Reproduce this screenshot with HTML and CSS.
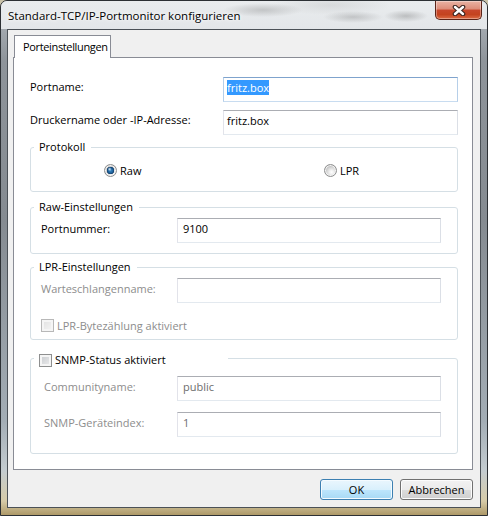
FILE: index.html
```html
<!DOCTYPE html>
<html lang="de">
<head>
    <meta charset="UTF-8">
    <title>Standard-TCP/IP-Portmonitor konfigurieren</title>
    <link rel="stylesheet" href="styles.css">
</head>
<body>
    <div class="window">
        <div class="titlebar">
            <span class="title">Standard-TCP/IP-Portmonitor konfigurieren</span>
            <button class="close" type="button" aria-label="Schließen">
                <svg width="14" height="11" viewBox="0 0 14 11">
                    <path d="M3 2 L11 9 M11 2 L3 9" stroke="#3b2520" stroke-width="4.6" stroke-linecap="round"/>
                    <path d="M3 2 L11 9 M11 2 L3 9" stroke="#fff" stroke-width="2.4" stroke-linecap="round"/>
                </svg>
            </button>
        </div>

        <div class="client">
            <div class="tabs">
                <div class="tab">Porteinstellungen</div>
            </div>

            <div class="pane">
                <div class="top-grid">
                    <label class="lbl">Portname:</label>
                    <div class="field field-top focused"><span class="sel">fritz.box</span></div>
                    <label class="lbl">Druckername oder -IP-Adresse:</label>
                    <div class="field field-top">fritz.box</div>
                </div>

                <fieldset class="group group-proto">
                    <legend>Protokoll</legend>
                    <div class="radios">
                        <label class="opt"><input class="radio" type="radio" name="proto" checked> Raw</label>
                        <label class="opt"><input class="radio" type="radio" name="proto"> LPR</label>
                    </div>
                </fieldset>

                <fieldset class="group group-raw">
                    <legend>Raw-Einstellungen</legend>
                    <div class="row">
                        <label class="lbl">Portnummer:</label>
                        <div class="field">9100</div>
                    </div>
                </fieldset>

                <fieldset class="group group-lpr">
                    <legend>LPR-Einstellungen</legend>
                    <div class="row">
                        <label class="lbl disabled">Warteschlangenname:</label>
                        <div class="field"></div>
                    </div>
                    <label class="opt disabled lpr-count"><input class="check" type="checkbox" disabled> LPR-Bytezählung aktiviert</label>
                </fieldset>

                <fieldset class="group group-snmp">
                    <legend class="legend-check">
                        <label class="opt"><input class="check" type="checkbox"> SNMP-Status aktiviert</label>
                    </legend>
                    <div class="row">
                        <label class="lbl disabled indent">Communityname:</label>
                        <div class="field disabled-text">public</div>
                    </div>
                    <div class="row row-next">
                        <label class="lbl disabled indent">SNMP-Geräteindex:</label>
                        <div class="field disabled-text">1</div>
                    </div>
                </fieldset>
            </div>

            <div class="actions">
                <button class="btn btn-default" type="button">OK</button>
                <button class="btn" type="button">Abbrechen</button>
            </div>
        </div>
    </div>
</body>
</html>
```

FILE: styles.css
```css
* {
    box-sizing: border-box;
}

body {
    margin: 0;
    background: #c9c2a8;
}

.window {
    width: 488px;
    height: 516px;
    display: flex;
    flex-direction: column;
    border: 1px solid #2c3034;
    border-radius: 7px 7px 0 0;
    overflow: hidden;
    font-family: "Open Sans", sans-serif;
    font-size: 11px;
    line-height: 15px;
    color: #000;
    /* glass frame round the client area */
    background: linear-gradient(to bottom,
        #b4bac0 0px, #8e949a 60px, #858b91 220px,
        #a3adb5 420px, #c4ccd0 470px, #d6cba8 500px, #a8925f 516px);
}

/* title bar: frosted glass with the blurred desktop behind it */
.titlebar {
    height: 28px;
    flex-shrink: 0;
    display: flex;
    align-items: flex-start;
    padding-left: 7px;
    background:
        radial-gradient(ellipse 40px 7px at 262px 9px, rgba(110, 110, 110, 0.3), transparent),
        radial-gradient(ellipse 30px 6px at 352px 16px, rgba(110, 110, 110, 0.3), transparent),
        radial-gradient(ellipse 22px 6px at 405px 15px, rgba(90, 90, 90, 0.3), transparent),
        radial-gradient(ellipse 60px 10px at 330px 4px, rgba(150, 150, 150, 0.2), transparent),
        linear-gradient(to bottom, #e9ecee, #e3e6e9);
}

.title {
    margin-top: 7px;
    font-size: 11.5px;
    text-shadow: 0 0 6px #fff, 0 0 3px #fff;
}

.close {
    margin-left: auto;
    margin-right: 5px;
    width: 47px;
    height: 19px;
    padding: 0;
    border: 1px solid #5b2418;
    border-top: none;
    border-radius: 0 0 5px 5px;
    display: flex;
    align-items: center;
    justify-content: center;
    background: linear-gradient(to bottom,
        #e9b3a4 0%, #dc8c78 45%, #c8472c 50%, #c4431f 75%, #dc6c45 100%);
    box-shadow: inset 0 0 0 1px rgba(255, 255, 255, 0.35);
}

.client {
    flex: 1;
    margin: 0 6px 7px;
    border: 1px solid #4b5157;
    background: #f0f0f0;
    padding: 5px 7px 0 5px;
    display: flex;
    flex-direction: column;
}

.tabs {
    display: flex;
    padding-left: 1px;
}

.tab {
    position: relative;
    width: 97px;
    height: 23px;
    margin-bottom: -1px;
    padding: 0 0 0 8px;
    border: 1px solid #898c95;
    border-bottom: none;
    background: #fff;
    line-height: 21px;
    white-space: nowrap;
    letter-spacing: -0.35px;
}

.pane {
    height: 413px;
    flex-shrink: 0;
    border: 1px solid #898c95;
    background: #fff;
    padding: 19px 14px 0 16px;
}

.top-grid {
    display: grid;
    grid-template-columns: 193px 1fr;
    row-gap: 8px;
    align-items: start;
}

.lbl {
    padding-top: 2px;
    white-space: nowrap;
}

.lbl.disabled,
.opt.disabled {
    color: #8d8d8d;
}

.lbl.indent {
    padding-left: 3px;
}

.field {
    height: 25px;
    border: 1px solid;
    border-color: #abadb3 #dbdfe6 #e3e9ef #e2e3ea;
    background: #fff;
    padding: 2px 5px;
    white-space: nowrap;
    overflow: hidden;
}

.field-top {
    padding-left: 3px;
}

.field.focused {
    border-color: #7fa3cd #b6cfe9 #c8dcf0 #b6cfe9;
}

.field.disabled-text {
    color: #6d6d6d;
}

.sel {
    background: #3399ff;
    color: #fff;
}

/* group boxes */
.group {
    margin: 0;
    min-width: 0;
    border: 1px solid #d5dfe5;
    border-radius: 3px;
    padding: 0 16px 0 10px;
}

.group legend {
    margin-left: -7px;
    padding: 0 6px 0 5px;
    line-height: 16px;
}

.group-proto {
    margin-top: 4px;
    padding-top: 8px;
    padding-bottom: 13px;
}

.group-raw {
    margin-top: 7px;
    padding-top: 3px;
    padding-bottom: 10px;
}

.group-lpr {
    margin-top: 5px;
    padding-top: 3px;
    padding-bottom: 6px;
}

.group-snmp {
    margin-top: 8px;
    padding-top: 8px;
    padding-bottom: 16px;
}

.group .legend-check {
    width: 194px;
    padding-top: 4px;
}

.row {
    display: grid;
    grid-template-columns: 136px 1fr;
    align-items: start;
}

.row .lbl {
    padding-top: 3px;
}

.row-next {
    margin-top: 11px;
}

.radios {
    display: grid;
    grid-template-columns: 220px auto;
    padding-left: 63px;
}

.opt {
    display: flex;
    align-items: center;
    gap: 3px;
    white-space: nowrap;
}

.lpr-count {
    margin-top: 15px;
}

/* radio buttons and check boxes, drawn like the system ones */
.radio {
    appearance: none;
    flex-shrink: 0;
    width: 13px;
    height: 13px;
    margin: 0;
    border: 1px solid #8e8f8f;
    border-radius: 50%;
    background: radial-gradient(circle at 60% 65%, #ffffff 0, #f1f1f1 2px, #d2d2d2 5px, #c4c4c4 6px);
    box-shadow: inset 0 0 0 1px #f4f4f4;
}

.radio:checked {
    background:
        radial-gradient(circle at 42% 38%, rgba(255, 255, 255, 0.85) 0, rgba(255, 255, 255, 0) 2px),
        radial-gradient(circle at 50% 50%, #3a8bc9 0, #1d5f98 2.5px, #123e6a 3.5px, rgba(18, 62, 106, 0) 4px),
        radial-gradient(circle at 60% 65%, #ffffff 0, #f1f1f1 2px, #d2d2d2 5px, #c4c4c4 6px);
}

.check {
    appearance: none;
    flex-shrink: 0;
    width: 13px;
    height: 13px;
    margin: 0;
    border: 1px solid #8e8f8f;
    background: linear-gradient(135deg, #c6c9cd 0%, #eeeeee 100%);
    box-shadow: inset 0 0 0 2px #f5f5f5;
}

.check:disabled {
    border-color: #b8b8b8;
    background: linear-gradient(135deg, #e0e0e0 0%, #f6f6f6 100%);
}

/* dialog buttons */
.actions {
    display: flex;
    justify-content: flex-end;
    gap: 7px;
    margin-top: 9px;
}

.btn {
    width: 73px;
    height: 21px;
    padding: 0;
    border: 1px solid #707070;
    border-radius: 3px;
    font-family: inherit;
    font-size: 11px;
    color: #000;
    background: linear-gradient(to bottom, #f2f2f2 0%, #ebebeb 50%, #dddddd 51%, #cfcfcf 100%);
    box-shadow: inset 0 0 0 1px #fcfcfc;
}

.btn-default {
    border-color: #3c7fb1;
    background: linear-gradient(to bottom, #eaf6fd 0%, #d9f0fc 50%, #bee6fd 51%, #a7d9f5 100%);
    box-shadow: inset 0 0 0 1px #f4fbff;
}
```
